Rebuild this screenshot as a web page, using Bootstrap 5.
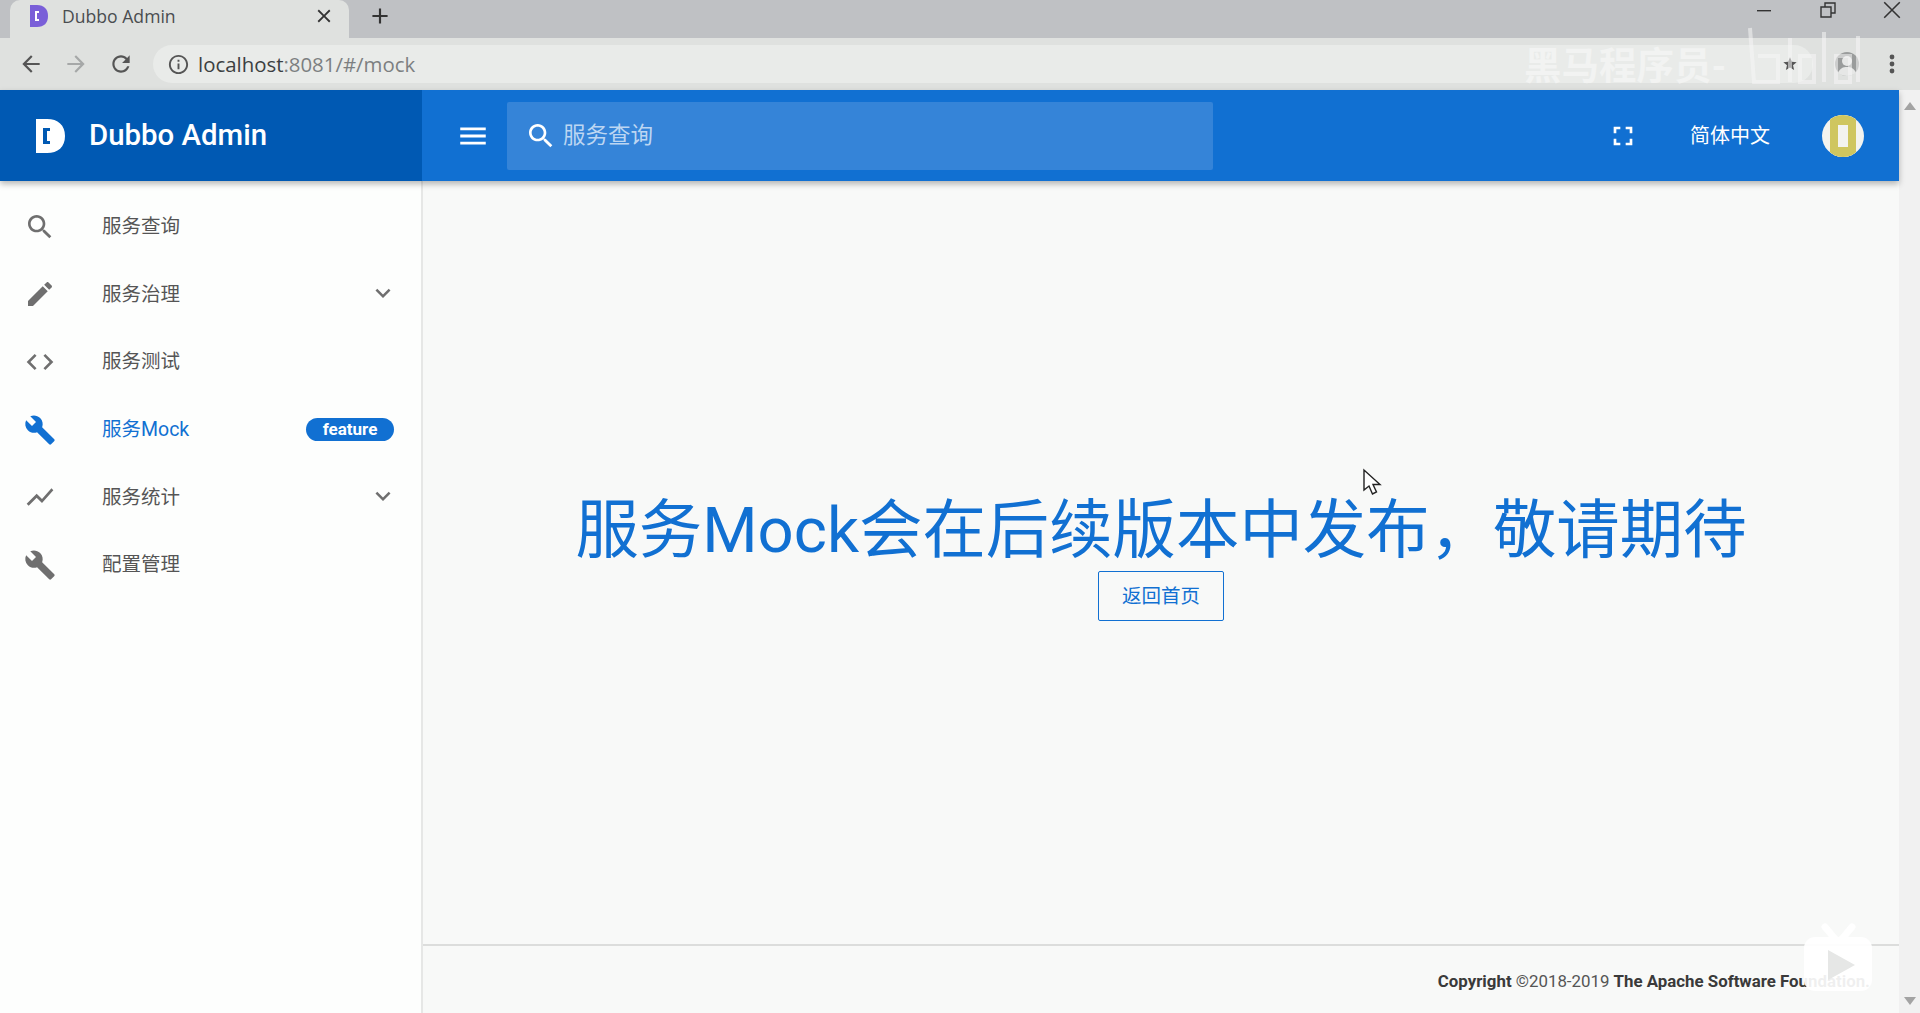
<!DOCTYPE html>
<html lang="zh-CN">
<head>
<meta charset="UTF-8">
<meta name="viewport" content="width=device-width, initial-scale=1">
<title>Dubbo Admin</title>
<link href="https://cdn.jsdelivr.net/npm/bootstrap@5.3.0/dist/css/bootstrap.min.css" rel="stylesheet">
<style>
    html, body { height: 1013px; overflow: hidden; }
    body { font-family: Roboto, "Noto Sans CJK SC", sans-serif; background: #f8f9f8; color: #555; position: relative; }
    svg { display: block; fill: currentColor; flex-shrink: 0; }

    .tab-strip { height: 38px; background: #bfc1c4; padding-left: 10px; }
    .tab-item { width: 339px; height: 38px; background: #dfe1df; border-radius: 10px 10px 0 0; padding: 0 14px 6px 20px; color: #4a4d50; font: 17.6px "Open Sans", sans-serif; }
    .tab-favicon { width: 18px; height: 22px; margin-right: 14px; }
    .add-tab { margin: -6px 0 0 18px; color: #333; }
    .win-controls { margin-left: auto; width: 165px; padding-right: 18px; color: #333; margin-top: -18px; }
    .tool-bar { height: 52px; background: #dfe1df; padding-left: 18px; color: #555; }
    .tool-gap { margin-left: 19px; }
    .url-pill { height: 38px; width: 1660px; margin-left: 19px; border-radius: 19px; background: #e9ebe9; padding-left: 14px; font: 20.4px "Open Sans", sans-serif; color: #7c7f81; }
    .url-host { color: #3c3f41; }
    .star-icon { margin-right: 15px; color: #555; }
    .tool-end { margin-left: auto; padding-right: 25px; gap: 29px; }

    .page-wrap { height: 923px; }
    .page-col { width: 1899px; }
    .scroll-rail { width: 21px; background: #f1f1f1; color: #a3a3a3; padding: 12px 0 8px; }

    .top-bar { height: 91px; background: #1170d2; color: #fff; padding: 0; box-shadow: 0 3px 6px rgba(0,0,0,.28); z-index: 2; flex-wrap: nowrap; }
    .brand-box { width: 422px; height: 91px; background: #0059b3; padding-left: 36px; margin: 0; color: #fff; font-size: 29.4px; font-weight: 500; }
    .brand-box svg { margin-right: 24px; }
    .menu-btn { width: 85px; padding-left: 16px; }
    .search-box { width: 706px; height: 68px; background: #3584d8; border-radius: 2px; padding-left: 18px; color: #fff; }
    .search-hint { margin-left: 6px; font-size: 22.5px; color: #bcd6f2; }
    .bar-right { margin-left: auto; }
    .lang-text { font-size: 20px; margin: 0 52px 0 51px; }
    .avatar-dot { width: 42px; height: 42px; border-radius: 50%; background: #f3f3ef; margin-right: 35px; overflow: hidden; }
    .avatar-bar { width: 26px; height: 42px; border: solid #cfc65f; border-width: 10px 8px; background: #f3f3ef; }

    .content-row { height: 832px; }
    .side-menu { width: 423px; background: #fdfefd; border-right: 2px solid #e6e7e6; padding-top: 12px; flex-wrap: nowrap; }
    .menu-row { height: 67.6px; padding: 0 28px 0 24px; color: #555; font-size: 19.5px; }
    .menu-row svg { color: #6f6f6f; }
    .menu-row.active, .menu-row.active:hover, .menu-row.active svg { color: #1170d2; }
    .menu-row:hover { color: #555; }
    .row-label { margin-left: 46px; }
    .row-end { margin: -3px -5px 0 auto; }
    .feature-tag { background: #1170d2; color: #fff; font-size: 17px; font-weight: 700; border-radius: 12px; width: 88px; height: 23px; padding: 0; line-height: 23px; margin-right: -1px; }

    .main-col { background: #f8f9f8; }
    .notice-area { padding-bottom: 12px; }
    .notice-title { font-size: 63.4px; line-height: 76px; color: #1170d2; font-weight: 400; margin: 0 0 3px; }
    .back-btn { width: 126px; height: 50px; font-size: 19.5px; padding: 2px 0 0; border-radius: 2px; border-color: #1170d2; color: #1170d2; }
    .foot-bar { height: 69px; border-top: 2px solid #dcdddc; padding: 22px 29px 0 0; font-size: 16.85px; line-height: 26px; color: #555; }
    .foot-bar b { color: #3a3a3a; font-weight: 700; }

    .mark-text { position: absolute; left: 1524px; top: 43px; font-size: 37.5px; line-height: 46px; color: rgba(245,246,245,.75); font-weight: 700; white-space: nowrap; }
    .mark-logo { position: absolute; left: 1746px; top: 26px; color: rgba(245,246,245,.55); }
    .mark-tv { position: absolute; left: 1800px; top: 922px; }
    .mouse-arrow { position: absolute; left: 1362px; top: 468px; }
</style>
</head>
<body>

<div class="tab-strip d-flex align-items-start">
    <div class="tab-item d-flex align-items-center">
        <svg class="tab-favicon" viewBox="0 0 18 22"><path fill="#7a5fd8" d="M0 0h7c7 0 11 4 11 11s-4 11-11 11H0z"/><path fill="#fff" d="M5 6h4v2H7v6h2v2H5z"/></svg>
        <span>Dubbo Admin</span>
        <svg class="ms-auto" width="22" height="22" viewBox="0 0 24 24"><path fill="#333" d="M19 6.41L17.59 5 12 10.59 6.41 5 5 6.41 10.59 12 5 17.59 6.41 19 12 13.41 17.59 19 19 17.59 13.41 12z"/></svg>
    </div>
    <svg class="add-tab align-self-center" width="26" height="26" viewBox="0 0 24 24"><path d="M19 13h-6v6h-2v-6H5v-2h6V5h2v6h6v2z"/></svg>
    <div class="win-controls d-flex justify-content-between align-items-center align-self-center">
        <svg width="18" height="18" viewBox="0 0 18 18"><path d="M2 9h14v1.4H2z"/></svg>
        <svg width="18" height="18" viewBox="0 0 18 18"><path fill="none" stroke="currentColor" stroke-width="1.4" d="M2 6h10v10H2zM6 6V2h10v10h-4"/></svg>
        <svg width="20" height="20" viewBox="0 0 18 18"><path fill="none" stroke="currentColor" stroke-width="1.4" d="M2 2l14 14M16 2L2 16"/></svg>
    </div>
</div>

<div class="tool-bar d-flex align-items-center">
    <svg width="26" height="26" viewBox="0 0 24 24"><path d="M20 11H7.83l5.59-5.59L12 4l-8 8 8 8 1.41-1.41L7.83 13H20v-2z"/></svg>
    <svg class="tool-gap" width="26" height="26" viewBox="0 0 24 24" style="color:#a6a8a8"><path d="M12 4l-1.41 1.41L16.17 11H4v2h12.17l-5.58 5.59L12 20l8-8z"/></svg>
    <svg class="tool-gap" width="26" height="26" viewBox="0 0 24 24"><path d="M17.65 6.35C16.2 4.9 14.21 4 12 4c-4.42 0-7.99 3.58-7.99 8s3.57 8 7.99 8c3.73 0 6.84-2.55 7.73-6h-2.08c-.82 2.33-3.04 4-5.65 4-3.31 0-6-2.69-6-6s2.69-6 6-6c1.66 0 3.14.69 4.22 1.78L13 11h7V4l-2.35 2.35z"/></svg>
    <div class="url-pill d-flex align-items-center">
        <svg class="me-2" width="23" height="23" viewBox="0 0 24 24" style="color:#555"><path d="M11 17h2v-6h-2v6zm1-15C6.48 2 2 6.48 2 12s4.48 10 10 10 10-4.48 10-10S17.52 2 12 2zm0 18c-4.41 0-8-3.59-8-8s3.59-8 8-8 8 3.59 8 8-3.59 8-8 8zm-1-11h2V7h-2v2z"/></svg>
        <span><span class="url-host">localhost</span>:8081/#/mock</span>
        <svg class="star-icon ms-auto" width="16" height="16" viewBox="0 0 24 24"><path d="M12 17.27L18.18 21l-1.64-7.03L22 9.24l-7.19-.61L12 2 9.19 8.63 2 9.24l5.46 4.73L5.82 21z"/></svg>
    </div>
    <div class="tool-end d-flex align-items-center">
        <svg width="26" height="26" viewBox="0 0 26 26"><circle cx="13" cy="13" r="12" fill="#9a9c9c"/><circle cx="13" cy="10" r="5" fill="#e6e7e6"/><path fill="#e6e7e6" d="M4 22c2-5 5-6 9-6s7 1 9 6c-5 4-13 4-18 0z"/></svg>
        <svg width="6" height="24" viewBox="0 0 6 24"><circle cx="3" cy="5" r="2.4"/><circle cx="3" cy="12" r="2.4"/><circle cx="3" cy="19" r="2.4"/></svg>
    </div>
</div>

<div class="page-wrap d-flex">
    <div class="page-col d-flex flex-column">
        <nav class="navbar top-bar justify-content-start align-items-center">
            <a class="navbar-brand brand-box d-flex align-items-center" href="#">
                <svg width="29" height="34" viewBox="0 0 29 34"><path fill="#fff" fill-rule="evenodd" d="M0 0h11c11 0 18 6 18 17s-7 17-18 17H0zM7 9v16h7v-3h-3V12h3V9z"/></svg>
                Dubbo Admin
            </a>
            <div class="menu-btn d-flex justify-content-center">
                <svg width="34" height="34" viewBox="0 0 24 24"><path d="M3 18h18v-2H3v2zm0-5h18v-2H3v2zm0-7v2h18V6H3z"/></svg>
            </div>
            <div class="search-box d-flex align-items-center">
                <svg width="32" height="32" viewBox="0 0 24 24"><path d="M15.5 14h-.79l-.28-.27C15.41 12.59 16 11.11 16 9.5 16 5.91 13.09 3 9.5 3S3 5.91 3 9.5 5.91 16 9.5 16c1.61 0 3.09-.59 4.23-1.57l.27.28v.79l5 4.99L20.49 19l-4.99-5zm-6 0C7.01 14 5 11.99 5 9.5S7.01 5 9.5 5 14 7.01 14 9.5 11.99 14 9.5 14z"/></svg>
                <span class="search-hint">服务查询</span>
            </div>
            <div class="bar-right d-flex align-items-center">
                <svg width="32" height="32" viewBox="0 0 24 24"><path d="M7 14H5v5h5v-2H7v-3zm-2-4h2V7h3V5H5v5zm12 7h-3v2h5v-5h-2v3zM14 5v2h3v3h2V5h-5z"/></svg>
                <span class="lang-text">简体中文</span>
                <div class="avatar-dot d-flex justify-content-center"><div class="avatar-bar"></div></div>
            </div>
        </nav>

        <div class="content-row d-flex">
            <div class="nav flex-column side-menu">
                <a class="nav-link menu-row d-flex align-items-center" href="#">
                    <svg width="32" height="32" viewBox="0 0 24 24"><path d="M15.5 14h-.79l-.28-.27C15.41 12.59 16 11.11 16 9.5 16 5.91 13.09 3 9.5 3S3 5.91 3 9.5 5.91 16 9.5 16c1.61 0 3.09-.59 4.23-1.57l.27.28v.79l5 4.99L20.49 19l-4.99-5zm-6 0C7.01 14 5 11.99 5 9.5S7.01 5 9.5 5 14 7.01 14 9.5 11.99 14 9.5 14z"/></svg>
                    <span class="row-label">服务查询</span>
                </a>
                <a class="nav-link menu-row d-flex align-items-center" href="#">
                    <svg width="32" height="32" viewBox="0 0 24 24"><path d="M3 17.25V21h3.75L17.81 9.94l-3.75-3.75L3 17.25zM20.71 7.04c.39-.39.39-1.02 0-1.41l-2.34-2.34c-.39-.39-1.02-.39-1.41 0l-1.83 1.83 3.75 3.75 1.83-1.83z"/></svg>
                    <span class="row-label">服务治理</span>
                    <svg class="row-end" width="30" height="30" viewBox="0 0 24 24"><path d="M16.59 8.59L12 13.17 7.41 8.59 6 10l6 6 6-6z"/></svg>
                </a>
                <a class="nav-link menu-row d-flex align-items-center" href="#">
                    <svg width="32" height="32" viewBox="0 0 24 24"><path d="M9.4 16.6L4.8 12l4.6-4.6L8 6l-6 6 6 6 1.4-1.4zm5.2 0l4.6-4.6-4.6-4.6L16 6l6 6-6 6-1.4-1.4z"/></svg>
                    <span class="row-label">服务测试</span>
                </a>
                <a class="nav-link menu-row active d-flex align-items-center" href="#">
                    <svg width="32" height="32" viewBox="0 0 24 24"><path d="M22.7 19l-9.1-9.1c.9-2.3.4-5-1.5-6.9-2-2-5-2.4-7.4-1.3L9 6 6 9 1.6 4.7C.4 7.1.9 10.1 2.9 12.1c1.9 1.9 4.6 2.4 6.9 1.5l9.1 9.1c.4.4 1 .4 1.4 0l2.3-2.3c.5-.4.5-1.1.1-1.4z"/></svg>
                    <span class="row-label">服务Mock</span>
                    <span class="badge feature-tag ms-auto">feature</span>
                </a>
                <a class="nav-link menu-row d-flex align-items-center" href="#">
                    <svg width="32" height="32" viewBox="0 0 24 24"><path d="M3.5 18.49l6-6.01 4 4L22 6.92l-1.41-1.41-7.09 7.97-4-4L2 16.99z"/></svg>
                    <span class="row-label">服务统计</span>
                    <svg class="row-end" width="30" height="30" viewBox="0 0 24 24"><path d="M16.59 8.59L12 13.17 7.41 8.59 6 10l6 6 6-6z"/></svg>
                </a>
                <a class="nav-link menu-row d-flex align-items-center" href="#">
                    <svg width="32" height="32" viewBox="0 0 24 24"><path d="M22.7 19l-9.1-9.1c.9-2.3.4-5-1.5-6.9-2-2-5-2.4-7.4-1.3L9 6 6 9 1.6 4.7C.4 7.1.9 10.1 2.9 12.1c1.9 1.9 4.6 2.4 6.9 1.5l9.1 9.1c.4.4 1 .4 1.4 0l2.3-2.3c.5-.4.5-1.1.1-1.4z"/></svg>
                    <span class="row-label">配置管理</span>
                </a>
            </div>

            <div class="main-col flex-grow-1 d-flex flex-column">
                <div class="notice-area flex-grow-1 d-flex flex-column justify-content-center align-items-center">
                    <h1 class="notice-title">服务Mock会在后续版本中发布，敬请期待</h1>
                    <button class="btn btn-outline-primary back-btn">返回首页</button>
                </div>
                <footer class="foot-bar text-end">
                    <b>Copyright</b> ©2018-2019 <b>The Apache Software Foundation.</b>
                </footer>
            </div>
        </div>
    </div>

    <div class="scroll-rail d-flex flex-column justify-content-between align-items-center">
        <svg width="12" height="8" viewBox="0 0 12 8"><path d="M6 0l6 8H0z"/></svg>
        <svg width="12" height="8" viewBox="0 0 12 8"><path d="M0 0h12L6 8z"/></svg>
    </div>
</div>

<!-- video watermarks and pointer sit over the page -->
<div class="mark-text">黑马程序员-</div>
<svg class="mark-logo" width="128" height="64" viewBox="0 0 128 64"><path fill="none" stroke="currentColor" stroke-width="4" d="M4 2l4 54h24V30H12M44 12v44M54 30h14v26H54zM78 6v50M90 30h14v26H90zM112 10v46"/></svg>
<svg class="mark-tv" width="76" height="72" viewBox="0 0 76 72">
    <path fill="none" stroke="#fff" stroke-width="7" stroke-linecap="round" d="M25 5l11 13M52 5L41 18"/>
    <rect x="4" y="15" width="68" height="54" rx="11" fill="#fff" fill-opacity=".92"/>
    <path fill="#e6e7e6" d="M28 28l27 15-27 15z"/>
</svg>
<svg class="mouse-arrow" width="20" height="28" viewBox="0 0 20 28"><path fill="#fff" stroke="#222" stroke-width="1.4" d="M2 2v20l5-4 3.5 8 4-2-3.5-7.500h7z"/></svg>

<script src="https://cdn.jsdelivr.net/npm/bootstrap@5.3.0/dist/js/bootstrap.bundle.min.js"></script>
</body>
</html>
